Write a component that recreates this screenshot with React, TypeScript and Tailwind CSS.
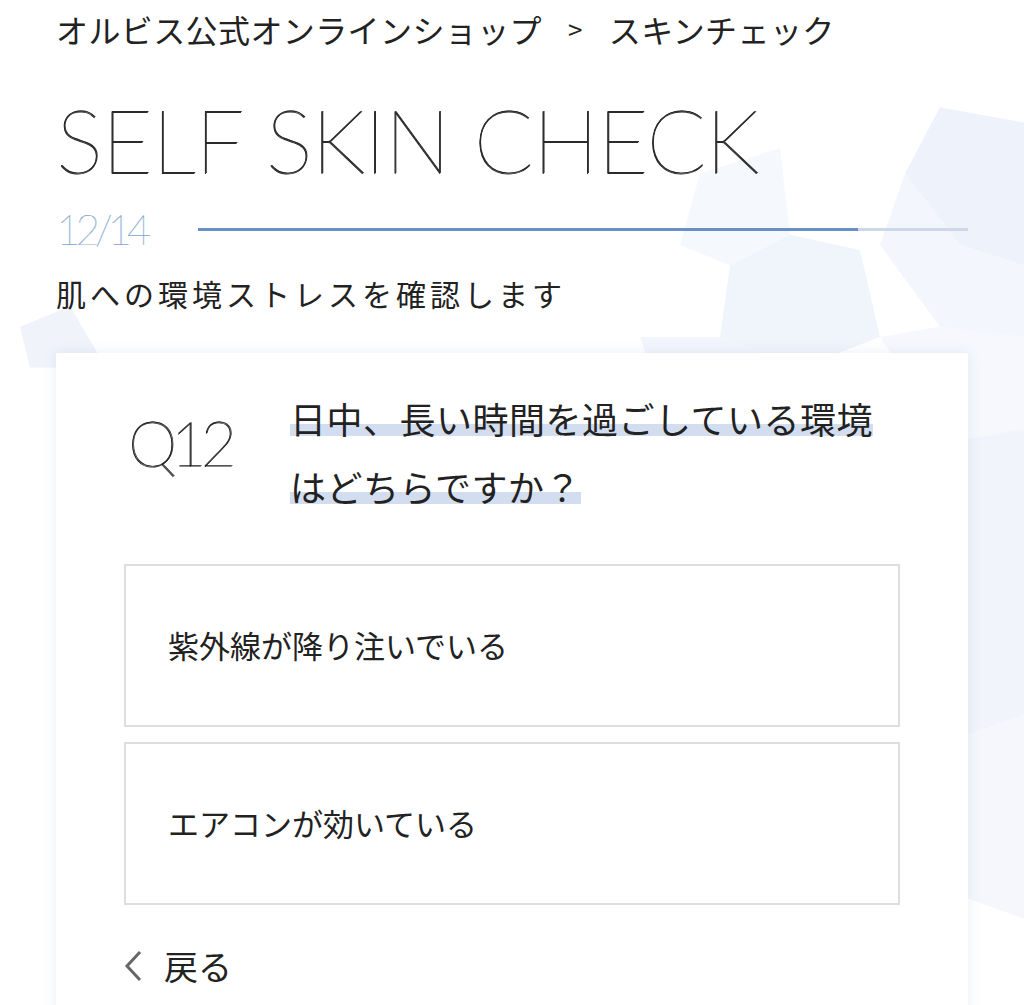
const jp = "font-['Noto_Sans_CJK_JP','Noto_Sans',sans-serif]";
const latin = "font-['Lato','Noto_Sans_CJK_JP',sans-serif] font-thin";

const options = ['紫外線が降り注いでいる', 'エアコンが効いている'];

function Backdrop() {
  // 背景の淡いポリゴン模様
  return (
    <svg
      className="pointer-events-none absolute inset-0 h-full w-full"
      viewBox="0 0 1024 1005"
      preserveAspectRatio="none"
    >
      <polygon points="940,105 1024,120 1024,260 960,240 905,170" fill="#edf2fb" />
      <polygon points="905,170 960,240 1024,260 1024,330 940,320 880,240" fill="#f3f6fc" />
      <polygon points="700,170 780,145 790,230 730,260 680,240" fill="#f5f8fd" />
      <polygon points="730,260 790,230 860,245 880,330 800,360 720,330" fill="#f0f4fb" />
      <polygon points="640,330 720,330 800,360 650,360" fill="#f2f5fc" />
      <polygon points="880,330 940,320 1024,330 1024,420 968,430 900,360" fill="#f6f8fd" />
      <polygon points="968,430 1024,420 1024,700 968,720" fill="#f1f4fb" />
      <polygon points="968,720 1024,700 1024,900 968,880" fill="#f5f7fc" />
      <polygon points="20,320 70,300 100,350 60,360 30,360" fill="#f0f3fa" />
    </svg>
  );
}

export default function App() {
  return (
    <div className={`relative min-h-[1005px] overflow-hidden bg-white text-[#222] ${jp}`}>
      <Backdrop />
      <div className="relative px-[56px]">
        <nav className="flex items-center pt-[12px] text-[32px] leading-[34px] tracking-[0.4px]">
          <span>オルビス公式オンラインショップ</span>
          <span className="mx-[26px] text-[26px]">&gt;</span>
          <span>スキンチェック</span>
        </nav>

        <h1 className={`mt-[49px] text-[88px] leading-none tracking-[-1px] text-[#2b2b2b] [text-shadow:0.7px_0_0_#2b2b2b,0_0.5px_0_#2b2b2b] ${latin}`}>
          SELF SKIN CHECK
        </h1>

        <div className="mt-[24px] flex items-center">
          <span className={`w-[142px] text-[42px] leading-[44px] tracking-[-5px] text-[#7d9fcf] [text-shadow:0.6px_0_0_#7d9fcf] ${latin}`}>
            12/14
          </span>
          <div className="flex h-[3px] flex-1">
            <div className="h-full bg-[#6a8fc4]" style={{ width: `${(12 / 14) * 100}%` }} />
            <div className="h-full flex-1 bg-[#cdd7e7]" />
          </div>
        </div>

        <p className="mt-[22px] text-[30px] leading-[40px] tracking-[4px]">
          肌への環境ストレスを確認します
        </p>

        <section className="mt-[40px] bg-white px-[68px] pb-[40px] pt-[31px] shadow-[0_0_12px_rgba(140,160,200,0.18)]">
          <div className="flex">
            <div className={`w-[166px] pl-[4px] pt-[27px] text-[62px] leading-[62px] tracking-[-6px] text-[#1a1a1a] [text-shadow:0.9px_0_0_#1a1a1a,0_0.6px_0_#1a1a1a] ${latin}`}>
              Q12
            </div>
            <h2 className="text-[36px] leading-[68px] tracking-[0.5px]">
              <span className="bg-[linear-gradient(transparent_62%,#d2ddef_62%,#d2ddef_84%,transparent_84%)] [box-decoration-break:clone]">
                日中、長い時間を過ごしている環境
                <br />
                はどちらですか？
              </span>
            </h2>
          </div>

          <div className="mt-[44px] flex flex-col gap-[15px]">
            {options.map(o => (
              <button
                key={o}
                className="flex h-[163px] items-center border-2 border-[#dedede] bg-white pl-[42px] text-left text-[31px]"
              >
                {o}
              </button>
            ))}
          </div>

          <button className="mt-[41px] flex items-center text-[34px] leading-[40px]">
            <svg width="20" height="34" viewBox="0 0 20 34" className="text-[#666]">
              <path d="M16 3 L3 17 L16 31" fill="none" stroke="currentColor" strokeWidth="3" />
            </svg>
            <span className="ml-[20px]">戻る</span>
          </button>
        </section>
      </div>
    </div>
  );
}
